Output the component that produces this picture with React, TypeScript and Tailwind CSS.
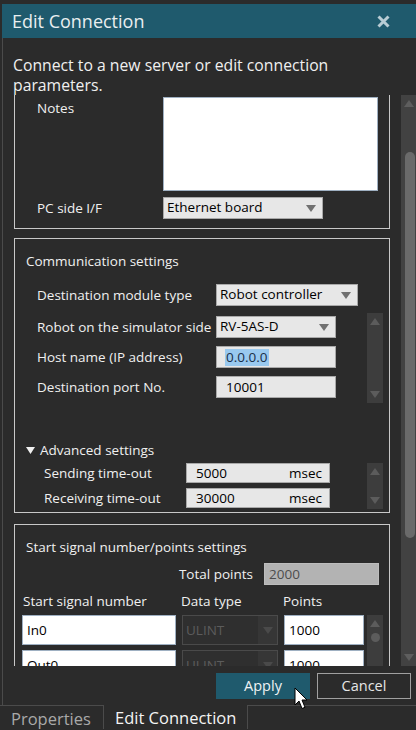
import React from "react";

const font = "font-['Open_Sans','Noto_Sans',sans-serif]";

function Caret({ color = "#707070" }: { color?: string }) {
  return (
    <svg width="10" height="7" viewBox="0 0 10 7">
      <path d="M0 0 L10 0 L5 7 Z" fill={color} />
    </svg>
  );
}

function Combo({ value, className }: { value: string; className: string }) {
  return (
    <div
      className={`flex h-[22px] items-center justify-between border border-[#a9a9a9] bg-[#e7e7e7] pl-[3px] pr-[6px] text-[13.5px] text-black ${className}`}
    >
      <span className="leading-none">{value}</span>
      <Caret />
    </div>
  );
}

function MiniScroll({ className, thumb }: { className: string; thumb?: boolean }) {
  return (
    <div className={`flex w-[16px] flex-col items-center justify-between bg-[#3d3d3d] py-[5px] ${className}`}>
      <svg width="10" height="7" viewBox="0 0 10 7">
        <path d="M0 7 L10 7 L5 0 Z" fill="#5c5c5c" />
      </svg>
      {thumb ? (
        <span className="mb-auto mt-[6px] h-[9px] w-[9px] rounded-full bg-[#5c5c5c]" />
      ) : (
        <svg width="10" height="7" viewBox="0 0 10 7">
          <path d="M0 0 L10 0 L5 7 Z" fill="#5c5c5c" />
        </svg>
      )}
    </div>
  );
}

function Label({ text, className = "" }: { text: string; className?: string }) {
  return <span className={`text-[13.5px] leading-[20px] text-[#f0f0f0] ${className}`}>{text}</span>;
}

function GridRow({ sig }: { sig: string }) {
  return (
    <div className="flex h-[30px] gap-[6px]">
      <div className="flex w-[154px] items-center border border-[#9fb0c2] bg-white pl-[4px] text-[13.5px] text-black">
        {sig}
      </div>
      <div className="flex w-[96px] items-center justify-between border border-[#4a4a4a] bg-[#2f2f2f] text-[13.5px] text-[#5c5c5c]">
        <span className="pl-[3px]">ULINT</span>
        <span className="flex h-full w-[19px] items-center justify-center bg-[#363636]">
          <Caret color="#4a4a4a" />
        </span>
      </div>
      <div className="flex w-[80px] items-center border border-[#9fb0c2] bg-white pl-[4px] text-[13.5px] text-black">
        1000
      </div>
    </div>
  );
}

export default function App() {
  return (
    <div className={`relative h-[730px] w-[416px] overflow-hidden bg-[#2b2b2b] ${font}`}>
      <div className="h-[4px] bg-[#2b2b2b]" />
      <div className="ml-[2px] flex h-[34px] items-center justify-between bg-[#1f5a6d] pl-[10px] pr-[26px]">
        <span className="text-[18px] leading-none text-[#e9eef0]">Edit Connection</span>
        <svg width="13" height="13" viewBox="0 0 13 13">
          <path d="M1.5 1.5 L11.5 11.5 M11.5 1.5 L1.5 11.5" stroke="#b8ccd4" strokeWidth="3" />
        </svg>
      </div>

      <div className="ml-[2px] border-l border-[#4b4b4b]">
        <p className="w-[350px] pl-[10px] pt-[17px] text-[15.75px] leading-[20px] text-[#f0f0f0]">
          Connect to a new server or edit connection parameters.
        </p>

        {/* scroll viewport */}
        <div className="flex h-[571px] overflow-hidden">
          <div className="w-[398px] pl-[11px]">
            {/* group 1 (top clipped) */}
            <div className="w-[376px] border-x border-b border-[#c8c8c8] pb-[9px] pl-[22px] pt-[2px]">
              <div className="flex">
                <Label text="Notes" className="w-[126px] pt-[1px]" />
                <div className="h-[94px] w-[215px] border border-[#9fb0c2] bg-white" />
              </div>
              <div className="mt-[6px] flex items-center">
                <Label text="PC side I/F" className="w-[126px]" />
                <Combo value="Ethernet board" className="w-[160px]" />
              </div>
            </div>

            {/* group 2 */}
            <div className="mt-[9px] w-[376px] border border-[#c8c8c8] pb-[3px] pt-[12px]">
              <Label text="Communication settings" className="block pl-[11px]" />
              <div className="mt-[13px] flex items-center pl-[22px]">
                <Label text="Destination module type" className="w-[179px]" />
                <Combo value="Robot controller" className="w-[142px]" />
              </div>
              <div className="mt-[7px] flex pl-[22px]">
                <div className="flex w-[330px] flex-col gap-[8px] pt-[3px]">
                  <div className="flex items-center">
                    <Label text="Robot on the simulator side" className="w-[179px] whitespace-nowrap" />
                    <Combo value="RV-5AS-D" className="w-[120px]" />
                  </div>
                  <div className="flex items-center">
                    <Label text="Host name (IP address)" className="w-[179px]" />
                    <div className="flex h-[22px] w-[120px] items-center border border-[#a9a9a9] bg-[#e7e7e7] pl-[8px]">
                      <span className="bg-[#99c9ef] px-[1px] text-[13.5px] leading-[17px] text-[#1a2f48]">0.0.0.0</span>
                    </div>
                  </div>
                  <div className="flex items-center">
                    <Label text="Destination port No." className="w-[179px]" />
                    <div className="flex h-[22px] w-[120px] items-center border border-[#a9a9a9] bg-[#e7e7e7] pl-[9px] text-[13.5px] text-black">
                      10001
                    </div>
                  </div>
                </div>
                <MiniScroll className="h-[90px]" />
              </div>

              <div className="mt-[37px] flex items-center pl-[11px]">
                <svg width="9" height="7" viewBox="0 0 9 7" className="mr-[5px]">
                  <path d="M0 0 L9 0 L4.5 7 Z" fill="#f0f0f0" />
                </svg>
                <Label text="Advanced settings" />
              </div>
              <div className="mt-[3px] flex pl-[29px]">
                <div className="flex w-[323px] flex-col gap-[5px]">
                  <div className="flex items-center">
                    <Label text="Sending time-out" className="w-[142px]" />
                    <div className="flex h-[20px] w-[144px] items-center justify-between border border-[#a9a9a9] bg-[#e7e7e7] pl-[9px] pr-[7px] text-[13.5px] text-black">
                      <span>5000</span>
                      <span>msec</span>
                    </div>
                  </div>
                  <div className="flex items-center">
                    <Label text="Receiving time-out" className="w-[142px]" />
                    <div className="flex h-[20px] w-[144px] items-center justify-between border border-[#a9a9a9] bg-[#e7e7e7] pl-[9px] pr-[7px] text-[13.5px] text-black">
                      <span>30000</span>
                      <span>msec</span>
                    </div>
                  </div>
                </div>
                <MiniScroll className="h-[46px]" />
              </div>
            </div>

            {/* group 3 */}
            <div className="mt-[11px] h-[200px] w-[376px] border border-[#c8c8c8] pt-[12px]">
              <Label text="Start signal number/points settings" className="block pl-[11px]" />
              <div className="mt-[6px] flex items-center justify-end pr-[10px]">
                <Label text="Total points" className="mr-[11px]" />
                <div className="flex h-[22px] w-[115px] items-center border border-[#bdbdbd] bg-[#b3b3b3] pl-[4px] text-[13.5px] text-[#4d4d4d]">
                  2000
                </div>
              </div>
              <div className="mt-[6px] flex pl-[8px]">
                <Label text="Start signal number" className="w-[158px]" />
                <Label text="Data type" className="w-[102px]" />
                <Label text="Points" />
              </div>
              <div className="mt-[4px] flex pl-[7px]">
                <div className="flex w-[345px] flex-col gap-[5px]">
                  <GridRow sig="In0" />
                  <GridRow sig="Out0" />
                </div>
                <MiniScroll className="h-[60px]" thumb />
              </div>
            </div>
          </div>

          {/* outer scrollbar */}
          <div className="relative ml-[2px] flex w-[15px] flex-col items-center justify-between bg-[#424242] py-[5px]">
            <svg width="10" height="7" viewBox="0 0 10 7">
              <path d="M0 7 L10 7 L5 0 Z" fill="#5e5e5e" />
            </svg>
            <span className="absolute left-[4px] top-[57px] h-[386px] w-[10px] rounded-full bg-[#6a6a6a]" />
            <svg width="10" height="7" viewBox="0 0 10 7">
              <path d="M0 0 L10 0 L5 7 Z" fill="#5e5e5e" />
            </svg>
          </div>
        </div>

        <div className="mt-[7px] flex justify-end gap-[7px] pr-[5px]">
          <button className="h-[26px] w-[94px] bg-[#1f5a6d] text-[14.5px] text-[#eef2f4]">Apply</button>
          <button className="h-[26px] w-[94px] border border-[#a0a0a0] text-[14.5px] text-[#e6e6e6]">Cancel</button>
        </div>
        <div className="h-[6px]" />
      </div>

      {/* bottom tabs */}
      <div className="flex h-[24px]">
        <div className="w-[104px] border-r border-t border-[#4b4b4b] pl-[11px] pt-[2px] text-[16.5px] leading-[22px] text-[#a9a9a9]">
          Properties
        </div>
        <div className="w-[143px] pl-[11px] pt-[2px] text-[16.5px] leading-[22px] text-[#f4f4f4]">Edit Connection</div>
        <div className="flex-1 border-l border-t border-[#4b4b4b]" />
      </div>

      {/* mouse cursor */}
      <svg className="absolute left-[294px] top-[687px]" width="14" height="23" viewBox="0 0 14 23">
        <path d="M1 1 L1 18 L5 14 L8 21.5 L11 20.3 L8 13 L13 13 Z" fill="white" stroke="black" strokeWidth="1" />
      </svg>
    </div>
  );
}
